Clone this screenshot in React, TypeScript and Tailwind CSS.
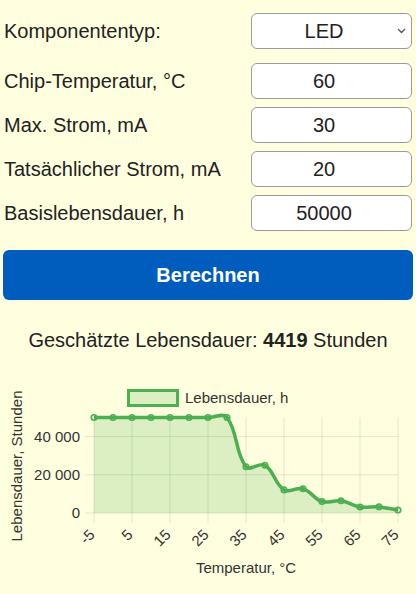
import React from "react";

const fields = [
  { label: "Chip-Temperatur, °C", value: "60" },
  { label: "Max. Strom, mA", value: "30" },
  { label: "Tatsächlicher Strom, mA", value: "20" },
  { label: "Basislebensdauer, h", value: "50000" },
];

// lifetime per temperature step (-5 .. 75 °C)
const temps = [-5, 0, 5, 10, 15, 20, 25, 30, 35, 40, 45, 50, 55, 60, 65, 70, 75];
const hours = [
  50000, 50000, 50000, 50000, 50000, 50000, 50000, 50000, 24200, 25000,
  12100, 12700, 6000, 6400, 3150, 3200, 1550,
];

const X0 = 94;
const X1 = 398;
const Y0 = 133;
const YTOP = 37.5;
const xAt = (i: number) => X0 + (i * (X1 - X0)) / (temps.length - 1);
const yAt = (v: number) => Y0 - (v / 50000) * (Y0 - YTOP);

type Pt = { x: number; y: number };

const buildPath = (pts: Pt[], t: number) => {
  const ctrl = pts.map((cur, i) => {
    const prev = pts[i - 1] ?? cur;
    const next = pts[i + 1] ?? cur;
    const d01 = Math.hypot(cur.x - prev.x, cur.y - prev.y);
    const d12 = Math.hypot(next.x - cur.x, next.y - cur.y);
    const s01 = d01 + d12 ? d01 / (d01 + d12) : 0;
    const s12 = d01 + d12 ? d12 / (d01 + d12) : 0;
    const fa = t * s01;
    const fb = t * s12;
    const clampY = (y: number) => Math.min(Math.max(y, YTOP - 6), Y0);
    return {
      prev: { x: cur.x - fa * (next.x - prev.x), y: clampY(cur.y - fa * (next.y - prev.y)) },
      next: { x: cur.x + fb * (next.x - prev.x), y: clampY(cur.y + fb * (next.y - prev.y)) },
    };
  });
  let d = `M${pts[0].x},${pts[0].y}`;
  for (let i = 1; i < pts.length; i++) {
    const a = ctrl[i - 1].next;
    const b = ctrl[i].prev;
    d += ` C${a.x},${a.y} ${b.x},${b.y} ${pts[i].x},${pts[i].y}`;
  }
  return d;
};

const LifetimeChart = () => {
  const pts = hours.map((h, i) => ({ x: xAt(i), y: yAt(h) }));
  const line = buildPath(pts, 0.4);
  const area = `${line} L${X1},${Y0} L${X0},${Y0} Z`;
  const grid = "rgba(0,0,0,0.1)";

  return (
    <svg width={416} height={214} className="block" style={{ fontFamily: "'Liberation Sans', Arial, sans-serif" }}>
      {/* legend */}
      <rect x={128.5} y={10.5} width={49} height={15} fill="rgba(76,175,80,0.2)" stroke="#4caf50" strokeWidth={3} />
      <text x={185} y={23} fontSize={15} fill="#333">
        Lebensdauer, h
      </text>

      {/* grid */}
      {[0, 20000, 40000].map((v) => (
        <line key={v} x1={85} x2={X1} y1={yAt(v)} y2={yAt(v)} stroke={grid} strokeWidth={1} />
      ))}
      {temps.map((tp, i) =>
        i % 2 === 0 ? (
          <line key={tp} x1={xAt(i)} x2={xAt(i)} y1={YTOP} y2={Y0 + 10} stroke={grid} strokeWidth={1} />
        ) : null,
      )}

      {/* y ticks */}
      {[
        [0, "0"],
        [20000, "20 000"],
        [40000, "40 000"],
      ].map(([v, l]) => (
        <text key={l} x={80} y={yAt(v as number) + 5} fontSize={15} fill="#333" textAnchor="end">
          {l}
        </text>
      ))}

      {/* x ticks */}
      {temps.map((tp, i) =>
        i % 2 === 0 ? (
          <text
            key={tp}
            fontSize={15}
            fill="#333"
            textAnchor="end"
            transform={`translate(${xAt(i) - 2},${152}) rotate(-45)`}
            dy={5}
          >
            {tp}
          </text>
        ) : null,
      )}

      {/* data */}
      <path d={area} fill="rgba(76,175,80,0.2)" />
      <path d={line} fill="none" stroke="#4caf50" strokeWidth={3.5} strokeLinejoin="round" />
      {pts.map((p, i) => (
        <circle key={i} cx={p.x} cy={p.y} r={2.8} fill="rgba(76,175,80,0.2)" stroke="#4caf50" strokeWidth={1.5} />
      ))}

      {/* axis titles */}
      <text x={246} y={193} fontSize={15} fill="#333" textAnchor="middle">
        Temperatur, °C
      </text>
      <text transform="translate(22,86) rotate(-90)" fontSize={15} fill="#333" textAnchor="middle">
        Lebensdauer, Stunden
      </text>
    </svg>
  );
};

export default function App() {
  return (
    <div className="min-h-[594px] w-[416px] bg-[#ffffe0] pt-[13px] font-['Liberation_Sans',Arial,sans-serif] text-[20px] text-[#222]">
      <div className="flex flex-col gap-2 px-1">
        <div className="mb-[6px] flex h-9 items-center justify-between">
          <label>Komponententyp:</label>
          <div className="relative">
            <select
              defaultValue="LED"
              className="h-9 w-[161px] appearance-none rounded-md border border-[#9a9a9a] bg-white pl-1 pr-[19px] text-[20px] text-[#222] [text-align-last:center]"
            >
              <option>LED</option>
            </select>
            <svg
              className="pointer-events-none absolute right-[6px] top-[15px]"
              width="9"
              height="6"
              viewBox="0 0 9 6"
            >
              <path d="M1 1l3.5 3.5L8 1" fill="none" stroke="#555" strokeWidth="1.3" />
            </svg>
          </div>
        </div>
        {fields.map((f) => (
          <div key={f.label} className="flex h-9 items-center justify-between">
            <label>{f.label}</label>
            <input
              readOnly
              value={f.value}
              className="h-9 w-[161px] rounded-md border border-[#9a9a9a] bg-white pl-1 pr-[19px] text-center text-[20px] text-[#222] outline-none"
            />
          </div>
        ))}
      </div>

      <div className="mx-[3px] mt-[19px]">
        <button className="flex h-[50px] w-full items-center justify-center rounded-md bg-[#005cbd] text-[20px] font-bold text-white">
          Berechnen
        </button>
      </div>

      <p className="mt-7 text-center leading-6">
        Geschätzte Lebensdauer: <b>4419</b> Stunden
      </p>

      <div className="mt-7">
        <LifetimeChart />
      </div>
    </div>
  );
}
